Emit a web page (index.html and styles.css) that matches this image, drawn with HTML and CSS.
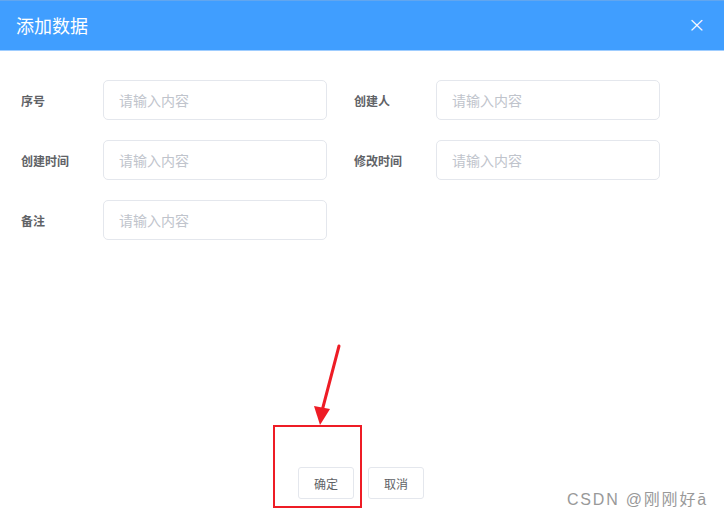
FILE: index.html
```html
<!DOCTYPE html>
<html lang="zh">
<head>
<meta charset="utf-8">
<link rel="stylesheet" href="styles.css">
</head>
<body>
<div class="dialog">
  <div class="dialog-header">
    <span class="dialog-title">添加数据</span>
    <span class="dialog-close">×</span>
  </div>
  <div class="dialog-body">
    <div class="form-grid">
      <div class="form-item"><label class="form-label">序号</label><input class="form-input" placeholder="请输入内容"></div>
      <div class="form-item"><label class="form-label">创建人</label><input class="form-input" placeholder="请输入内容"></div>
      <div class="form-item"><label class="form-label">创建时间</label><input class="form-input" placeholder="请输入内容"></div>
      <div class="form-item"><label class="form-label">修改时间</label><input class="form-input" placeholder="请输入内容"></div>
      <div class="form-item"><label class="form-label">备注</label><input class="form-input" placeholder="请输入内容"></div>
    </div>
  </div>
  <div class="dialog-footer">
    <button class="btn">确定</button>
    <button class="btn">取消</button>
  </div>
</div>
<div class="annot-box"></div>
<svg class="annot-arrow" width="40" height="90" viewBox="0 0 40 90">
  <line x1="29" y1="3" x2="12" y2="68" stroke="#ee1c25" stroke-width="3" stroke-linecap="round"/>
  <polygon points="4,63 20,66 10,82" fill="#ee1c25"/>
</svg>
<div class="watermark">CSDN @刚刚好ā</div>
</body>
</html>
```
FILE: styles.css
```css
* { box-sizing: border-box; }
html, body { margin: 0; padding: 0; background: #fff; }
body {
  width: 724px;
  height: 518px;
  overflow: hidden;
  position: relative;
  font-family: "Noto Sans CJK SC", "Noto Sans", sans-serif;
}
.dialog { display: flex; flex-direction: column; height: 518px; }
.dialog-header {
  height: 51px;
  background: #409eff;
  border-top: 1px solid #62a6ef;
  border-bottom: 1px solid #9fcdff;
  display: flex;
  align-items: center;
  justify-content: space-between;
  padding: 0 18px 0 16px;
  color: #fff;
}
.dialog-title { font-size: 18px; line-height: 24px; margin-top: -2px; }
.dialog-close { font-size: 22px; line-height: 22px; font-family: "DejaVu Sans", sans-serif; font-weight: 300; margin-top: -1px; }
.dialog-body { padding: 29px 0 0 21px; flex: 1; }
.form-grid {
  display: grid;
  grid-template-columns: 306px 306px;
  row-gap: 20px;
  column-gap: 27px;
}
.form-item { display: flex; align-items: center; height: 40px; }
.form-label {
  width: 82px;
  font-size: 12px;
  font-weight: 700;
  color: #606266;
}
.form-input {
  width: 224px;
  height: 40px;
  border: 1px solid #e4e7ed;
  border-radius: 5px;
  padding: 0 15px;
  font-family: inherit;
  font-size: 14px;
  color: #606266;
  outline: none;
}
.form-input::placeholder { color: #c0c4cc; }
.dialog-footer {
  display: flex;
  gap: 14px;
  padding: 0 0 19px 298px;
}
.btn {
  width: 56px;
  height: 32px;
  border: 1px solid #e4e7ed;
  border-radius: 3px;
  background: #fff;
  font-family: inherit;
  font-size: 12px;
  color: #606266;
  padding: 0;
}
.annot-box {
  position: absolute;
  left: 273px;
  top: 425px;
  width: 89px;
  height: 83px;
  border: 2px solid #ee1c25;
}
.annot-arrow { position: absolute; left: 310px; top: 343px; }
.watermark {
  position: absolute;
  left: 567px;
  top: 486px;
  font-size: 16px;
  color: #999;
  font-family: "Liberation Sans", "Noto Sans CJK SC", sans-serif;
  letter-spacing: 1.8px;
}
```
